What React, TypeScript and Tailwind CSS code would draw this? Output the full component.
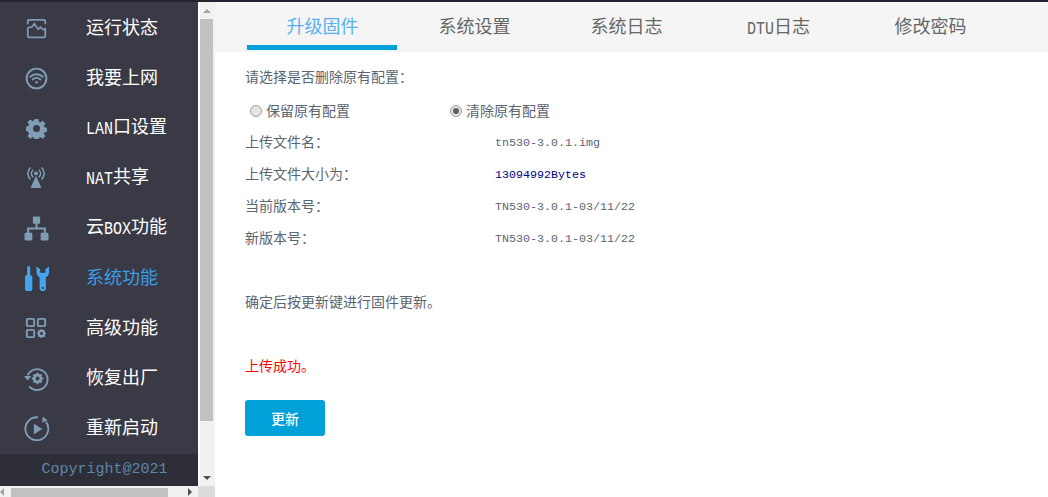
import React from "react";

const c = "currentColor";
const icons: Record<string, React.ReactNode> = {
  status: (
    <g fill="none" stroke={c} strokeWidth="2">
      <path d="M2 7V3.5A1.5 1.5 0 0 1 3.500 2h17A1.500 1.500 0 0 1 22 3.500V7" />
      <path d="M2 11v9.500A1.500 1.500 0 0 0 3.500 22h17a1.500 1.500 0 0 0 1.500-1.500V11" />
      <path d="M2 10.500h4.500L9.500 6.500l4.500 6.500 2.500-2.500 3 2.500H22" strokeWidth="1.800" />
    </g>
  ),
  wifi: (
    <g fill="none" stroke={c} strokeWidth="2">
      <circle cx="12" cy="12" r="10.300" />
      <path d="M5.500 10.200a9.500 9.500 0 0 1 13 0M8 13a6 6 0 0 1 8 0" strokeLinecap="round" />
      <circle cx="12" cy="16" r="1.300" fill={c} stroke="none" />
    </g>
  ),
  gear: (
    <path
      fill={c}
      fillRule="evenodd"
      d="M9.800 1h4.400l.6 3.200 1.700.7 2.700-1.800 3.100 3.100-1.800 2.700.7 1.700 3.200.6v4.400l-3.200.6-.7 1.700 1.800 2.700-3.100 3.100-2.700-1.800-1.700.7-.6 3.200H9.800l-.6-3.200-1.700-.7-2.700 1.800-3.100-3.100 1.800-2.700-.7-1.700L-.4 14.200V9.800l3.200-.6.7-1.700-1.800-2.700 3.100-3.100 2.700 1.800 1.700-.7zM12 8a4 4 0 1 0 0 8 4 4 0 0 0 0-8z"
    />
  ),
  nat: (
    <g fill="none" stroke={c} strokeWidth="1.700" strokeLinecap="round">
      <circle cx="12" cy="7" r="2" fill={c} stroke="none" />
      <path d="M8.500 3.500a5 5 0 0 0 0 7M15.500 3.500a5 5 0 0 1 0 7M5.500 1a9 9 0 0 0 0 12M18.500 1a9 9 0 0 1 0 12" />
      <path d="M12 9.500L18 23H6z" fill={c} stroke="none" />
    </g>
  ),
  tree: (
    <g fill={c}>
      <rect x="8.500" y="0.500" width="7" height="7" rx="1" />
      <rect x="0.500" y="16" width="7.500" height="7.500" rx="1" />
      <rect x="16" y="16" width="7.500" height="7.500" rx="1" />
      <path d="M11 7h2v4h8v6h-2v-4H5v4H3v-6h8z" />
    </g>
  ),
  tools: (
    <g fill={c}>
      <path d="M4.500 0A1.600 1.600 0 0 1 6 1.600V9h1.200c.5 0 .8.400.8.800v12.500c0 .9-.7 1.700-1.700 1.700H2.700C1.800 24 1 23.300 1 22.300V9.800c0-.4.400-.8.800-.8H3V1.600A1.600 1.600 0 0 1 4.500 0z" />
      <path d="M12 0.500v5.500c0 2.500 1.500 4 3 4.700V21.500a3 2.500 0 0 0 6 0V10.700C22.500 10 24 8.500 24 6V.5l-3.500 2.500v3.500h-5V3z" />
      <circle cx="18" cy="21" r="1" fill="#3a3a46" />
    </g>
  ),
  grid: (
    <g fill="none" stroke={c} strokeWidth="2">
      <rect x="2" y="2" width="8" height="8" rx="1" />
      <rect x="14" y="2" width="8" height="8" rx="1" />
      <rect x="2" y="14" width="8" height="8" rx="1" />
      <circle cx="18" cy="18" r="2.800" strokeWidth="2.400" />
      <path d="M18 13v2M18 21v2M13 18h2M21 18h2M14.500 14.500l1.400 1.400M20.100 20.100l1.400 1.400M14.500 21.500l1.400-1.400M20.100 15.900l1.400-1.400" strokeWidth="1.800" />
    </g>
  ),
  restore: (
    <g>
      <path d="M3.500 9A10 10 0 1 1 5 19.500" fill="none" stroke={c} strokeWidth="1.800" />
      <path d="M0 9.500h7l-3.500 4.500z" fill={c} />
      <circle cx="13" cy="12" r="3.200" fill="none" stroke={c} strokeWidth="2.600" />
      <path d="M13 6.500v2.500M13 15v2.500M7.500 12H10M16 12h2.500M9.200 8.200l1.600 1.600M15.200 14.200l1.600 1.600M9.200 15.800l1.600-1.600M15.200 9.800l1.600-1.600" stroke={c} strokeWidth="2" />
    </g>
  ),
  reboot: (
    <g>
      <path d="M13.500 1.300A11 11 0 1 0 21 5.500" fill="none" stroke={c} strokeWidth="1.800" />
      <path d="M18 0.500l4.500 3.500-5 2.500z" fill={c} />
      <path d="M9.500 7.500l8 5-8 5z" fill={c} />
    </g>
  ),
};

function Latin({ children }: { children: React.ReactNode }) {
  return <span className="inline-block origin-center scale-y-[1.25] font-['Liberation_Mono'] text-[15px] leading-none">{children}</span>;
}

const menu: { icon: string; size: string; label: React.ReactNode; active?: boolean }[] = [
  { icon: "status", size: "w-[21px] h-[21px]", label: "运行状态" },
  { icon: "wifi", size: "w-[23px] h-[23px]", label: "我要上网" },
  { icon: "gear", size: "w-[21px] h-[21px]", label: <><Latin>LAN</Latin>口设置</> },
  { icon: "nat", size: "w-[22px] h-[22px]", label: <><Latin>NAT</Latin>共享</> },
  { icon: "tree", size: "w-[25px] h-[25px]", label: <>云<Latin>BOX</Latin>功能</> },
  { icon: "tools", size: "w-[25px] h-[25px]", label: "系统功能", active: true },
  { icon: "grid", size: "w-[22px] h-[22px]", label: "高级功能" },
  { icon: "restore", size: "w-[25px] h-[25px]", label: "恢复出厂" },
  { icon: "reboot", size: "w-[25px] h-[25px]", label: "重新启动" },
];

const tabs: React.ReactNode[] = ["升级固件", "系统设置", "系统日志", <span><Latin>DTU</Latin>日志</span>, "修改密码"];

const info: [string, string, string][] = [
  ["上传文件名：", "tn530-3.0.1.img", "text-[#5a6570]"],
  ["上传文件大小为：", "13094992Bytes", "text-[#000080]"],
  ["当前版本号：", "TN530-3.0.1-03/11/22", "text-[#5a6570]"],
  ["新版本号：", "TN530-3.0.1-03/11/22", "text-[#5a6570]"],
];

function Radio({ checked, label }: { checked?: boolean; label: string }) {
  return (
    <div className="flex w-[200px] items-center">
      <span className="ml-[5px] mr-[4px] flex h-[12px] w-[12px] items-center justify-center rounded-full border border-[#a0a0a0] bg-[#e4e4e4]">
        {checked && <span className="h-[6px] w-[6px] rounded-full bg-[#606060]" />}
      </span>
      <span>{label}</span>
    </div>
  );
}

export default function App() {
  return (
    <div className="flex h-[497px] w-[1048px] flex-col overflow-hidden bg-white font-['Noto_Sans_CJK_SC','Liberation_Sans',sans-serif]">
      <div className="h-[2px] shrink-0 bg-[#24242e]" />
      <div className="flex min-h-0 flex-1">
        <div className="flex w-[215px] shrink-0 flex-col">
          <div className="flex min-h-0 flex-1">
            <aside className="flex w-[198px] shrink-0 flex-col bg-[#3a3a46] pt-[1px]">
              {menu.map((m, i) => (
                <div key={i} className={`flex h-[50px] shrink-0 items-center ${m.active ? "text-[#3a9de8]" : "text-white"}`}>
                  <div className={`flex w-[72px] items-center justify-center ${m.active ? "text-[#42a5ee]" : "text-[#7f9db5]"}`}>
                    <svg viewBox="0 0 24 24" className={m.size}>{icons[m.icon]}</svg>
                  </div>
                  <div className="ml-[14px] pb-[4px] text-[18px] leading-none">{m.label}</div>
                </div>
              ))}
              <div className="mt-[1px] flex flex-1 items-center justify-center bg-[#2e2e38] pl-[11px] font-['Liberation_Mono'] text-[15px] text-[#5f87aa]">
                Copyright@2021
              </div>
            </aside>
            <div className="flex w-[17px] shrink-0 flex-col border-l-2 border-white bg-[#f1f1f1] pr-[2px]">
              <div className="flex h-[17px] items-center justify-center">
                <span className="h-0 w-0 border-x-[4px] border-b-[4px] border-x-transparent border-b-[#a3a3a3]" />
              </div>
              <div className="h-[402px] bg-[#c1c1c1]" />
              <div className="flex-1" />
              <div className="flex h-[17px] items-center justify-center">
                <span className="h-0 w-0 border-x-[4px] border-t-[4px] border-x-transparent border-t-[#505050]" />
              </div>
            </div>
          </div>
          <div className="flex h-[11px] shrink-0 items-start bg-[#f1f1f1]">
            <div className="flex h-[11px] w-[11px] items-center">
              <span className="h-0 w-0 border-y-[4px] border-r-[4px] border-y-transparent border-r-[#a3a3a3]" />
            </div>
            <div className="mt-[2px] h-[9px] w-[157px] bg-[#c1c1c1]" />
            <div className="ml-[20px] flex h-[11px] w-[10px] items-center">
              <span className="h-0 w-0 border-y-[4px] border-l-[4px] border-y-transparent border-l-[#505050]" />
            </div>
            <div className="ml-auto h-[11px] w-[17px] bg-[#dcdcdc]" />
          </div>
        </div>

        <main className="min-w-0 flex-1 text-[14px] text-[#5a6570]">
          <nav className="flex h-[50px] gap-[2px] bg-[#f5f5f5] pl-[32px] text-[18px]">
            {tabs.map((t, i) => (
              <div key={i} className={`flex h-[48px] w-[150px] items-center justify-center border-b-[5px] pt-[4px] pl-[1px] ${i === 0 ? "border-[#00a0d8] text-[#59b0f0]" : "border-transparent text-[#666]"}`}>
                {t}
              </div>
            ))}
          </nav>
          <div className="pl-[30px]">
            <div className="mb-[3px] mt-[7px] flex h-[32px] items-center pt-[2px]">请选择是否删除原有配置：</div>
            <div className="flex h-[32px] items-center pt-[1px]">
              <Radio label="保留原有配置" />
              <Radio checked label="清除原有配置" />
            </div>
            {info.map(([k, v, col]) => (
              <div key={k} className="flex h-[32px] items-center">
                <div className="w-[250px] pb-[2px]">{k}</div>
                <div className={`pt-[4px] font-['Liberation_Mono'] text-[11.670px] ${col}`}>{v}</div>
              </div>
            ))}
            <div className="mt-[32px] flex h-[32px] items-center pb-[2px]">确定后按更新键进行固件更新。</div>
            <div className="mt-[32px] flex h-[32px] items-center pb-[2px] text-[#ff0000]">上传成功。</div>
            <button className="mt-[18px] h-[36px] w-[80px] rounded-[3px] bg-[#00a0d8] text-[14px] font-medium text-white">更新</button>
          </div>
        </main>
      </div>
    </div>
  );
}
